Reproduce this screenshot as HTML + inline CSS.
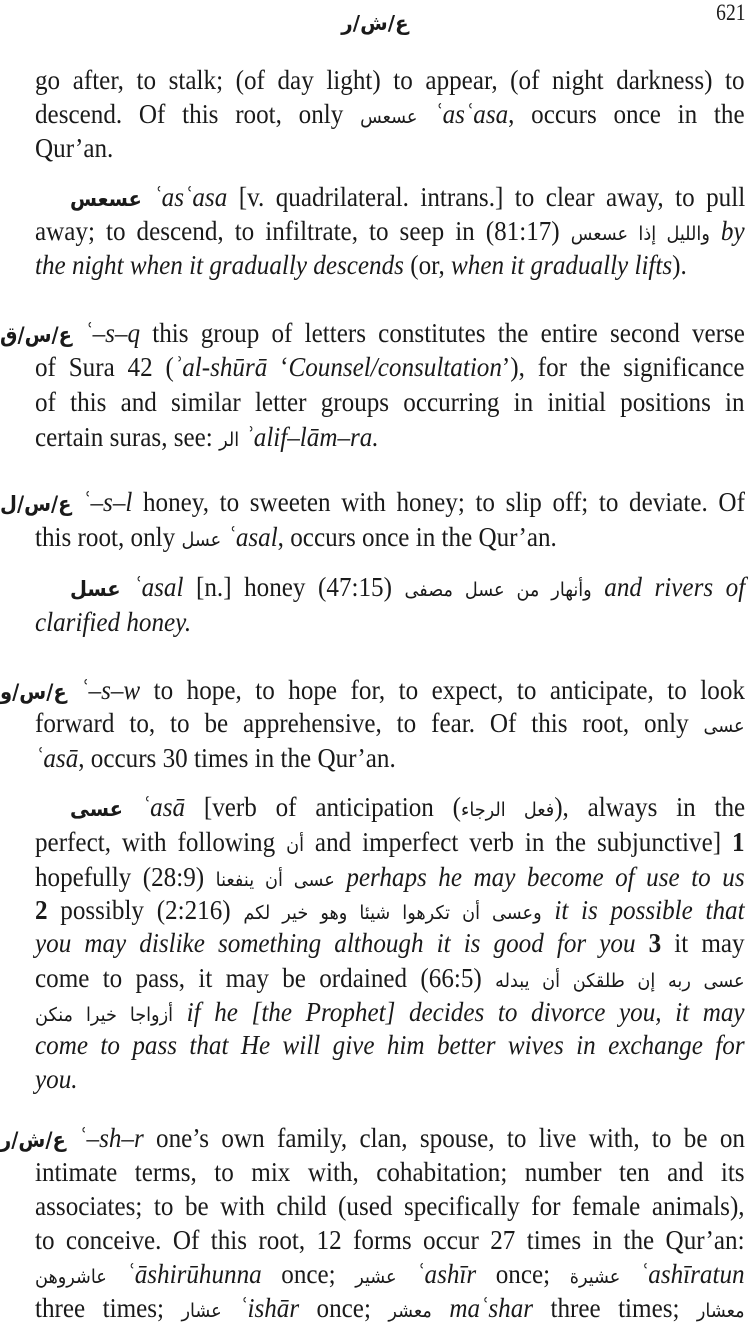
<!DOCTYPE html>
<html><head><meta charset="utf-8"><style>
html,body{margin:0;padding:0;background:#fff}
body{width:750px;height:1331px;position:relative;overflow:hidden;color:#1a1a1a;font-family:"Liberation Serif",serif}
.l{position:absolute;height:34px;line-height:34px;font-size:27px;white-space:nowrap;transform:scaleX(0.93);transform-origin:0 0;text-align:justify;text-align-last:justify}
.c{left:35px;width:763px}
.h{left:0;width:801px}
.i{left:70px;width:726px}
.e{text-align-last:left}
.ar{font-family:"DejaVu Sans",sans-serif;font-size:19px}
.arb{font-family:"DejaVu Sans",sans-serif;font-size:21px;font-weight:bold}
i{font-style:italic}
</style></head><body>
<div style="position:absolute;left:0;width:750px;top:6px;text-align:center;font-family:'DejaVu Sans',sans-serif;font-size:20px;font-weight:bold;line-height:34px">ع/ش/ر</div>
<div style="position:absolute;right:5px;top:0;font-size:23px;line-height:26px;transform:scaleX(0.85);transform-origin:100% 0">621</div>

<div class="l c" style="top:63px">go after, to stalk; (of day light) to appear, (of night darkness) to</div>
<div class="l c" style="top:97px">descend. Of this root, only <span class="ar">عسعس</span> <i>ʿasʿasa</i>, occurs once in the</div>
<div class="l c e" style="top:131px">Qur’an.</div>

<div class="l i" style="top:180px"><span class="arb">عسعس</span> <i>ʿasʿasa</i> [v. quadrilateral. intrans.] to clear away, to pull</div>
<div class="l c" style="top:214px">away; to descend, to infiltrate, to seep in (81:17) <span class="ar">والليل إذا عسعس</span> <i>by</i></div>
<div class="l c e" style="top:248px"><i>the night when it gradually descends</i> (or, <i>when it gradually lifts</i>).</div>

<div class="l h" style="top:316px"><span class="arb">ع/س/ق</span> <i>ʿ–s–q</i> this group of letters constitutes the entire second verse</div>
<div class="l c" style="top:350px">of Sura 42 (<i>ʾal-shūrā</i> ‘<i>Counsel/consultation</i>’), for the significance</div>
<div class="l c" style="top:385px">of this and similar letter groups occurring in initial positions in</div>
<div class="l c e" style="top:420px">certain suras, see: <span class="ar">الر</span> <i>ʾalif–lām–ra.</i></div>

<div class="l h" style="top:485px"><span class="arb">ع/س/ل</span> <i>ʿ–s–l</i> honey, to sweeten with honey; to slip off; to deviate. Of</div>
<div class="l c e" style="top:520px">this root, only <span class="ar">عسل</span> <i>ʿasal</i>, occurs once in the Qur’an.</div>
<div class="l i" style="top:570px"><span class="arb">عسل</span> <i>ʿasal</i> [n.] honey (47:15) <span class="ar">وأنهار من عسل مصفى</span> <i>and rivers of</i></div>
<div class="l c e" style="top:605px"><i>clarified honey.</i></div>

<div class="l h" style="top:673px"><span class="arb">ع/س/و</span> <i>ʿ–s–w</i> to hope, to hope for, to expect, to anticipate, to look</div>
<div class="l c" style="top:706px">forward to, to be apprehensive, to fear. Of this root, only <span class="ar">عسى</span></div>
<div class="l c e" style="top:741px"><i>ʿasā</i>, occurs 30 times in the Qur’an.</div>
<div class="l i" style="top:790px"><span class="arb">عسى</span> <i>ʿasā</i> [verb of anticipation (<span class="ar">فعل الرجاء</span>), always in the</div>
<div class="l c" style="top:825px">perfect, with following <span class="ar">أن</span> and imperfect verb in the subjunctive] <b>1</b></div>
<div class="l c" style="top:860px">hopefully (28:9) <span class="ar">عسى أن ينفعنا</span> <i>perhaps he may become of use to us</i></div>
<div class="l c" style="top:893px"><b>2</b> possibly (2:216) <span class="ar">وعسى أن تكرهوا شيئا وهو خير لكم</span> <i>it is possible that</i></div>
<div class="l c" style="top:926px"><i>you may dislike something although it is good for you</i> <b>3</b> it may</div>
<div class="l c" style="top:961px">come to pass, it may be ordained (66:5) <span class="ar">عسى ربه إن طلقكن أن يبدله</span></div>
<div class="l c" style="top:995px"><span class="ar">أزواجا خيرا منكن</span> <i>if he [the Prophet] decides to divorce you, it may</i></div>
<div class="l c" style="top:1028px"><i>come to pass that He will give him better wives in exchange for</i></div>
<div class="l c e" style="top:1062px"><i>you.</i></div>

<div class="l h" style="top:1121px"><span class="arb">ع/ش/ر</span> <i>ʿ–sh–r</i> one’s own family, clan, spouse, to live with, to be on</div>
<div class="l c" style="top:1155px">intimate terms, to mix with, cohabitation; number ten and its</div>
<div class="l c" style="top:1189px">associates; to be with child (used specifically for female animals),</div>
<div class="l c" style="top:1223px">to conceive. Of this root, 12 forms occur 27 times in the Qur’an:</div>
<div class="l c" style="top:1257px"><span class="ar">عاشروهن</span> <i>ʿāshirūhunna</i> once; <span class="ar">عشير</span> <i>ʿashīr</i> once; <span class="ar">عشيرة</span> <i>ʿashīratun</i></div>
<div class="l c" style="top:1291px">three times; <span class="ar">عشار</span> <i>ʿishār</i> once; <span class="ar">معشر</span> <i>maʿshar</i> three times; <span class="ar">معشار</span></div>
</body></html>
